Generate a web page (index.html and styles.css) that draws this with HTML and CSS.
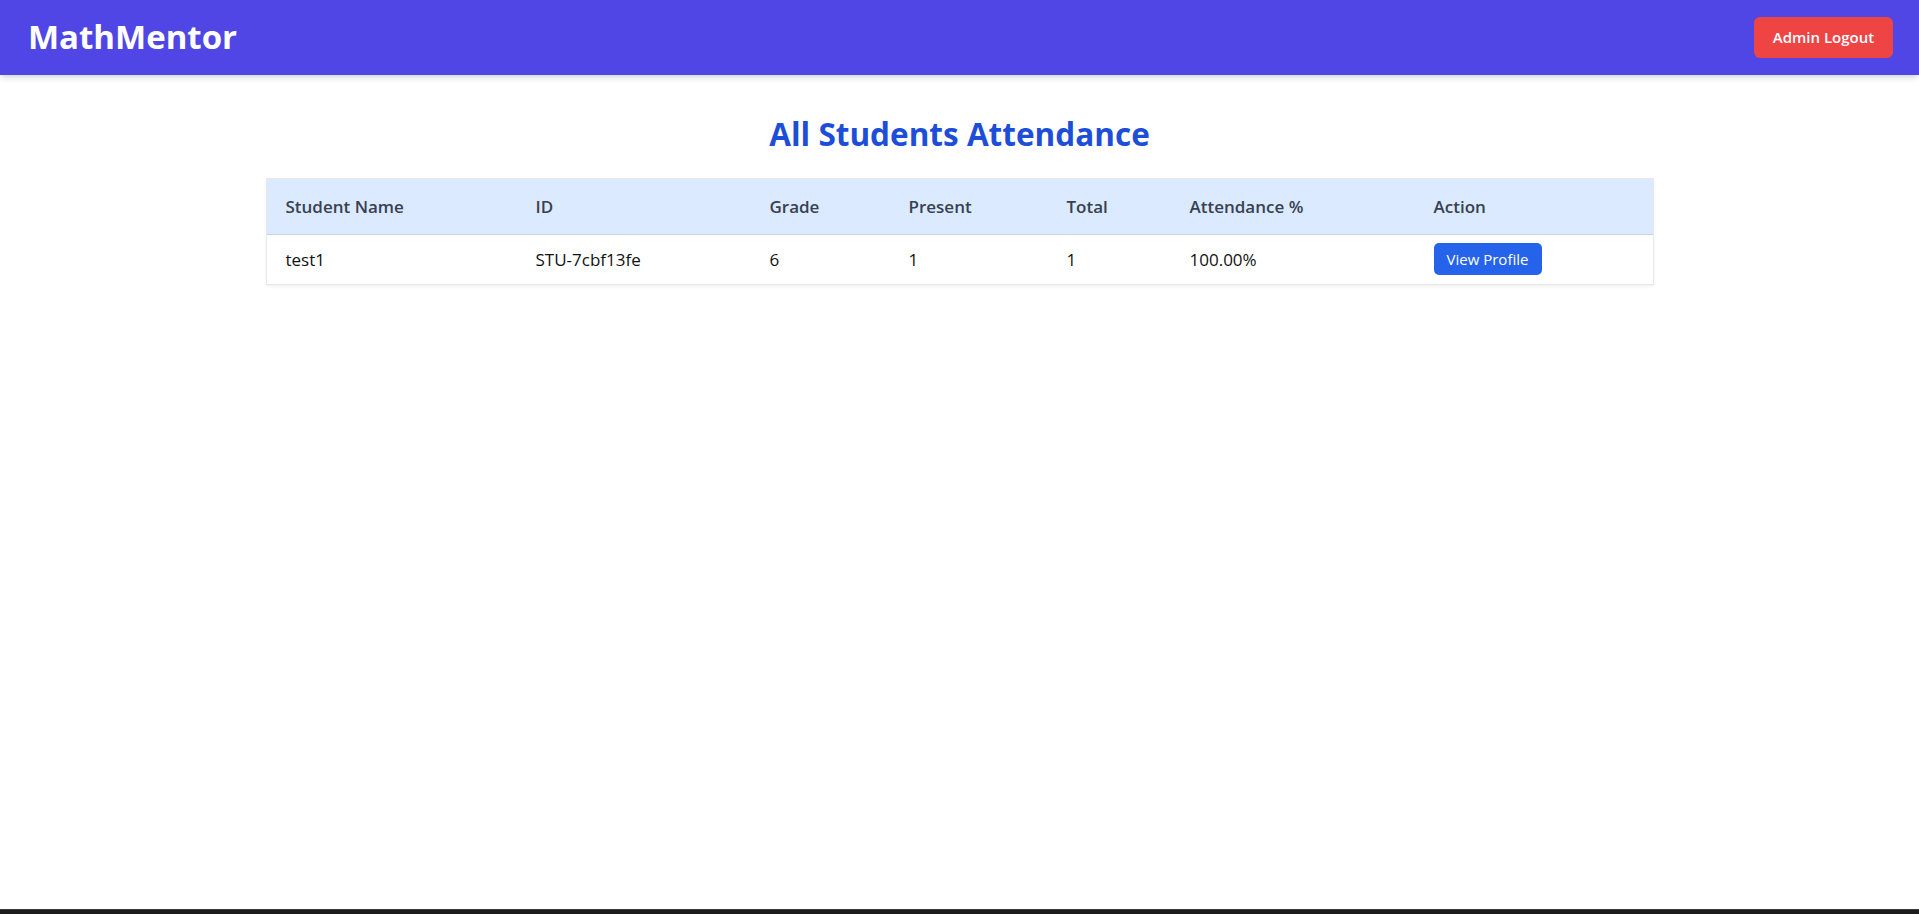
FILE: index.html
```html
<!DOCTYPE html>
<html lang="en">
<head>
<meta charset="utf-8">
<title>MathMentor - All Students Attendance</title>
<link rel="stylesheet" href="styles.css">
</head>
<body>
<header class="topbar">
  <div class="logo">MathMentor</div>
  <button class="logout-btn" type="button">Admin Logout</button>
</header>
<main class="content">
  <h1 class="page-title">All Students Attendance</h1>
  <div class="table-card">
    <table class="att-table">
      <colgroup>
        <col class="c-name"><col class="c-id"><col class="c-grade"><col class="c-present"><col class="c-total"><col class="c-pct"><col class="c-action">
      </colgroup>
      <thead>
        <tr>
          <th>Student Name</th>
          <th>ID</th>
          <th>Grade</th>
          <th>Present</th>
          <th>Total</th>
          <th>Attendance %</th>
          <th>Action</th>
        </tr>
      </thead>
      <tbody>
        <tr>
          <td>test1</td>
          <td>STU-7cbf13fe</td>
          <td>6</td>
          <td>1</td>
          <td>1</td>
          <td>100.00%</td>
          <td><button class="view-btn" type="button">View Profile</button></td>
        </tr>
      </tbody>
    </table>
  </div>
</main>
<div class="window-edge"></div>
</body>
</html>
```
FILE: styles.css
```css
* { box-sizing: border-box; }
html, body { margin: 0; padding: 0; }
body {
  font-family: "Open Sans", "Noto Sans", sans-serif;
  background: #ffffff;
  min-height: 100vh;
  display: flex;
  flex-direction: column;
}
.topbar {
  height: 75px;
  background: #4F46E5;
  display: flex;
  align-items: center;
  justify-content: space-between;
  padding: 0 26px 0 28px;
  box-shadow: 0 4px 6px -1px rgba(0,0,0,0.12), 0 2px 4px -2px rgba(0,0,0,0.1);
  position: relative;
  z-index: 1;
}
.logo {
  color: #ffffff;
  font-weight: 700;
  font-size: 33px;
  line-height: 1;
  margin-top: -3px;
}
.logout-btn {
  width: 139px;
  height: 41px;
  margin-top: -1px;
  background: #EF4444;
  color: #ffffff;
  border: none;
  border-radius: 6px;
  font-family: inherit;
  font-size: 15px;
  font-weight: 600;
  padding: 0;
}
.content {
  flex: 1;
  padding-top: 39px;
}
.page-title {
  margin: 0 0 25px;
  text-align: center;
  color: #1D4ED8;
  font-size: 31.5px;
  font-weight: 700;
  line-height: 40px;
}
.table-card {
  width: 1386px;
  margin: 0 auto;
  background: #ffffff;
  box-shadow: 0 0 0 1px #e5e7eb, 0 2px 4px rgba(0,0,0,0.08);
}
.att-table {
  width: 100%;
  border-collapse: collapse;
  table-layout: fixed;
}
.c-name { width: 250px; }
.c-id { width: 234px; }
.c-grade { width: 139px; }
.c-present { width: 158px; }
.c-total { width: 123px; }
.c-pct { width: 244px; }
.c-action { width: 238px; }
.att-table th {
  height: 55px;
  padding: 0 18px 0 19px;
  text-align: left;
  background: #DBEAFE;
  color: #374151;
  font-size: 17px;
  font-weight: 600;
  border-bottom: 1px solid #CBD5E1;
}
.att-table td {
  height: 50px;
  padding: 0 18px 0 19px;
  color: #111111;
  font-size: 17px;
}
.view-btn {
  width: 108px;
  height: 32px;
  background: #2563EB;
  color: #ffffff;
  border: none;
  border-radius: 5px;
  font-family: inherit;
  font-size: 15px;
  padding: 0;
  vertical-align: middle;
}
.window-edge {
  height: 5px;
  background: #1c1c1c;
  border-top: 1px solid #3b3b3b;
}
```
